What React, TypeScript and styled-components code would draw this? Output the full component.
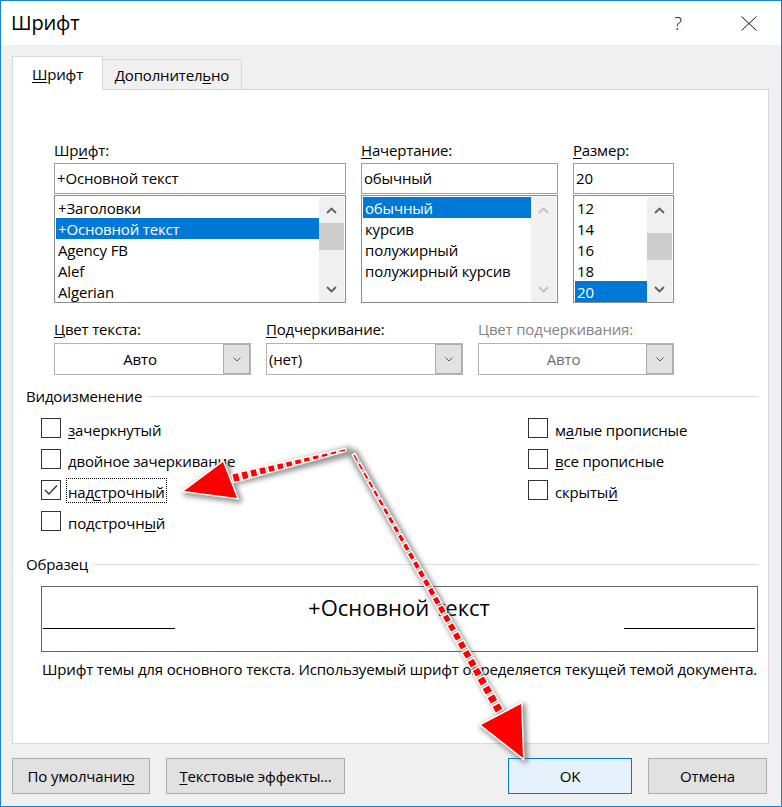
import React from "react";
import styled, { createGlobalStyle, css } from "styled-components";

const FONT = `"Open Sans", "Noto Sans", "DejaVu Sans", sans-serif`;

const GlobalStyle = createGlobalStyle`
  html, body { margin: 0; padding: 0; background: #ffffff; }
  body { font-family: ${FONT}; font-size: 15px; letter-spacing: -0.17px; color: #000; }
  * { box-sizing: border-box; }
`;

/* ---------- window frame ---------- */

const Window = styled.div`
  position: relative;
  width: 782px;
  height: 807px;
  border: 1px solid #1883d7;
  background: #f0f0f0;
  display: flex;
  flex-direction: column;
  overflow: hidden;
`;

const TitleBar = styled.div`
  height: 44px;
  flex: none;
  background: #fff;
  display: flex;
  align-items: center;
  padding: 0 9px 0 10px;
`;

const Title = styled.div`
  flex: 1;
  font-size: 20px;
  line-height: 26px;
`;

const TitleButton = styled.div`
  width: 46px;
  height: 44px;
  display: flex;
  align-items: center;
  justify-content: center;
  font-size: 19px;
  font-weight: 300;
  color: #111;
  & + & { margin-left: 25px; }
`;

const Body = styled.div`
  flex: 1;
  display: flex;
  flex-direction: column;
  padding: 11px 12px 12px 11px;
`;

/* ---------- tabs ---------- */

const TabStrip = styled.div`
  display: flex;
  align-items: flex-end;
  height: 33px;
  flex: none;
`;

const Tab = styled.div<{ $active?: boolean }>`
  display: flex;
  align-items: center;
  justify-content: center;
  border: 1px solid #d9d9d9;
  border-bottom: none;
  white-space: nowrap;
  ${(p) =>
    p.$active
      ? css`
          width: 91px;
          height: 34px;
          margin-bottom: -1px;
          background: #fff;
          position: relative;
          z-index: 1;
        `
      : css`
          width: 139px;
          height: 30px;
          border-left: none;
          background: #f0f0f0;
        `}
`;

const Panel = styled.div`
  height: 655px;
  flex: none;
  background: #fff;
  border: 1px solid #d9d9d9;
  padding: 50px 10px 0 13px;
  display: flex;
  flex-direction: column;
`;

const Key = styled.span`
  text-decoration: underline;
  text-decoration-thickness: 1px;
  text-underline-offset: 2px;
`;

/* ---------- font / style / size pickers ---------- */

const PickerRow = styled.div`
  display: grid;
  grid-template-columns: 292px 197px 101px;
  column-gap: 15px;
  margin-left: 28px;
`;

const Field = styled.div`
  display: flex;
  flex-direction: column;
`;

const FieldLabel = styled.div<{ $disabled?: boolean }>`
  height: 20px;
  line-height: 20px;
  white-space: nowrap;
  color: ${(p) => (p.$disabled ? "#838383" : "#000")};
`;

const TextBox = styled.div`
  margin-top: 3px;
  height: 31px;
  border: 1px solid #a0a0a0;
  padding-left: 2px;
  line-height: 29px;
  white-space: nowrap;
`;

const ListFrame = styled.div`
  margin-top: 1px;
  height: 108px;
  border: 1px solid #8c8c8c;
  padding: 1px 1px 0 1px;
  display: flex;
  background: #fff;
`;

const Items = styled.div`
  flex: 1;
  min-width: 0;
  display: flex;
  flex-direction: column;
  overflow: hidden;
`;

const Item = styled.div<{ $selected?: boolean }>`
  height: 21px;
  line-height: 22px;
  padding-left: 2px;
  white-space: nowrap;
  background: ${(p) => (p.$selected ? "#0078d7" : "transparent")};
  color: ${(p) => (p.$selected ? "#fff" : "#000")};
`;

const ScrollBar = styled.div`
  width: 25px;
  height: 105px;
  flex: none;
  display: flex;
  flex-direction: column;
  background: #f0f0f0;
`;

const ScrollButton = styled.div`
  height: 26px;
  flex: none;
  display: flex;
  align-items: center;
  justify-content: center;
`;

const Track = styled.div`
  flex: 1;
`;

const Thumb = styled.div<{ $offset: number }>`
  height: 27px;
  margin-top: ${(p) => p.$offset}px;
  background: #cdcdcd;
`;

const Chevron = ({ up, color }: { up?: boolean; color: string }) => (
  <svg width="11" height="7" viewBox="0 0 11 7">
    <path
      d={up ? "M1 6 L5.5 1.5 L10 6" : "M1 1 L5.5 5.5 L10 1"}
      fill="none"
      stroke={color}
      strokeWidth="1.8"
    />
  </svg>
);

type ListProps = {
  items: string[];
  selected: number;
  thumb?: number;
  disabled?: boolean;
};

const ListBox = ({ items, selected, thumb, disabled }: ListProps) => {
  const arrow = disabled ? "#c2c2c2" : "#606060";
  return (
    <ListFrame>
      <Items>
        {items.map((t, i) => (
          <Item key={t} $selected={i === selected}>
            {t}
          </Item>
        ))}
      </Items>
      <ScrollBar>
        <ScrollButton>
          <Chevron up color={arrow} />
        </ScrollButton>
        <Track>{thumb !== undefined && <Thumb $offset={thumb} />}</Track>
        <ScrollButton>
          <Chevron color={arrow} />
        </ScrollButton>
      </ScrollBar>
    </ListFrame>
  );
};

/* ---------- combo boxes ---------- */

const ComboRow = styled.div`
  display: grid;
  grid-template-columns: 197px 197px 196px;
  column-gap: 15px;
  margin-left: 28px;
  margin-top: 16px;
`;

const Combo = styled.div`
  margin-top: 4px;
  height: 32px;
  border: 1px solid #b4b4b4;
  display: flex;
  background: #fff;
`;

const ComboValue = styled.div<{ $center?: boolean; $disabled?: boolean }>`
  flex: 1;
  line-height: 30px;
  padding-left: 2px;
  text-align: ${(p) => (p.$center ? "center" : "left")};
  color: ${(p) => (p.$disabled ? "#6d6d6d" : "#000")};
`;

const ComboButton = styled.div`
  width: 27px;
  flex: none;
  background: #e1e1e1;
  border: 1px solid #adadad;
  display: flex;
  align-items: center;
  justify-content: center;
`;

const SmallChevron = () => (
  <svg width="8" height="5" viewBox="0 0 8 5">
    <path d="M0.5 0.5 L4 4 L7.5 0.5" fill="none" stroke="#5a5a5a" strokeWidth="1" />
  </svg>
);

/* ---------- group headers ---------- */

const Legend = styled.div<{ $gap: number }>`
  display: flex;
  align-items: center;
  gap: 6px;
  height: 20px;
  margin-top: ${(p) => p.$gap}px;
  white-space: nowrap;
`;

const LegendRule = styled.div`
  flex: 1;
  height: 1px;
  background: #dcdcdc;
`;

/* ---------- effects check boxes ---------- */

const Effects = styled.div`
  display: grid;
  grid-template-columns: 487px 1fr;
  margin: 12px 0 0 15px;
`;

const CheckColumn = styled.div`
  display: flex;
  flex-direction: column;
  gap: 11px;
`;

const CheckRow = styled.div`
  display: flex;
  align-items: center;
  height: 20px;
  gap: 5px;
`;

const Box = styled.div`
  width: 20px;
  height: 20px;
  flex: none;
  border: 1px solid #333;
  background: #fff;
  display: flex;
  align-items: center;
  justify-content: center;
`;

const CheckLabel = styled.div<{ $focused?: boolean }>`
  line-height: 20px;
  padding: 3px 1px 0;
  border: 1px dotted ${(p) => (p.$focused ? "#000" : "transparent")};
  white-space: nowrap;
`;

const Tick = () => (
  <svg width="14" height="12" viewBox="0 0 14 12">
    <path d="M1 6 L5 10 L13 1.5" fill="none" stroke="#333" strokeWidth="1.3" />
  </svg>
);

/* ---------- sample ---------- */

const SampleBox = styled.div`
  margin: 12px 0 0 15px;
  height: 66px;
  border: 1px solid #646464;
  display: flex;
  flex-direction: column;
  padding: 6px 2px 0 1px;
`;

const SampleText = styled.div`
  font-size: 22px;
  line-height: 29px;
  letter-spacing: 0;
  text-align: center;
`;

const Baselines = styled.div`
  display: flex;
  justify-content: space-between;
  margin-top: 6px;
`;

const Baseline = styled.div<{ $w: number }>`
  width: ${(p) => p.$w}px;
  height: 1px;
  background: #000;
`;

const Note = styled.div`
  margin: 7px 0 0 16px;
  line-height: 20px;
  white-space: nowrap;
`;

/* ---------- buttons ---------- */

const Footer = styled.div`
  display: flex;
  margin-top: 14px;
  padding-right: 2px;
  gap: 16px;
`;

const Spacer = styled.div`
  flex: 1;
`;

const Button = styled.div<{ $w: number; $primary?: boolean }>`
  width: ${(p) => p.$w}px;
  height: 36px;
  display: flex;
  align-items: center;
  justify-content: center;
  white-space: nowrap;
  border: 1px solid ${(p) => (p.$primary ? "#0078d7" : "#adadad")};
  background: ${(p) => (p.$primary ? "#e5f1fb" : "#e1e1e1")};
`;

/* ---------- red pointer arrows ---------- */

const Overlay = styled.svg`
  position: absolute;
  left: -1px;
  top: -1px;
  pointer-events: none;
`;

type Pt = [number, number];

type Dash = { a: Pt; b: Pt; w: number };

function makeDashes(from: Pt, to: Pt, count: number, w0: number, w1: number, fill: number): Dash[] {
  const dx = to[0] - from[0];
  const dy = to[1] - from[1];
  const out: Dash[] = [];
  for (let i = 0; i < count; i++) {
    const t0 = i / count;
    const t1 = (i + fill) / count;
    const w = w0 + ((w1 - w0) * i) / (count - 1);
    out.push({
      a: [from[0] + dx * t0, from[1] + dy * t0],
      b: [from[0] + dx * t1, from[1] + dy * t1],
      w,
    });
  }
  return out;
}

function extend(d: Dash, by: number): [Pt, Pt] {
  const dx = d.b[0] - d.a[0];
  const dy = d.b[1] - d.a[1];
  const len = Math.hypot(dx, dy) || 1;
  const ux = (dx / len) * by;
  const uy = (dy / len) * by;
  return [
    [d.a[0] - ux, d.a[1] - uy],
    [d.b[0] + ux, d.b[1] + uy],
  ];
}

type ArrowSpec = { from: Pt; to: Pt; count: number; head: Pt[] };

const corner: Pt = [350, 449];

const arrows: ArrowSpec[] = [
  {
    from: [345, 450],
    to: [230, 479],
    count: 13,
    head: [
      [184, 491],
      [223, 462],
      [237, 498],
    ],
  },
  {
    from: [354, 455],
    to: [501, 714],
    count: 29,
    head: [
      [523, 758],
      [481, 725],
      [521, 704],
    ],
  },
];

const Arrows = () => {
  const sets = arrows.map((ar) => makeDashes(ar.from, ar.to, ar.count, 1.5, 7.5, 0.62));
  const pts = (p: Pt[]) => p.map((q) => q.join(",")).join(" ");
  return (
    <Overlay width="782" height="807" viewBox="0 0 782 807">
      <defs>
        <filter id="glow" x="-20%" y="-20%" width="140%" height="140%">
          <feGaussianBlur stdDeviation="2.6" />
        </filter>
      </defs>
      <g filter="url(#glow)" opacity="0.6" transform="translate(2 2)">
        {arrows.map((ar, i) => (
          <g key={i}>
            <polyline
              points={pts([corner, ar.to])}
              fill="none"
              stroke="#555"
              strokeWidth="10"
              strokeLinejoin="round"
            />
            <polygon points={pts(ar.head)} fill="#555" stroke="#555" strokeWidth="6" strokeLinejoin="round" />
          </g>
        ))}
      </g>
      {sets.map((set, i) => (
        <g key={i}>
          {set.map((d, j) => {
            const [a, b] = extend(d, 1.5);
            return (
              <line
                key={j}
                x1={a[0]}
                y1={a[1]}
                x2={b[0]}
                y2={b[1]}
                stroke="#fff"
                strokeWidth={d.w + 3}
              />
            );
          })}
          <polygon points={pts(arrows[i].head)} fill="#fff" stroke="#fff" strokeWidth="3" strokeLinejoin="miter" />
          {set.map((d, j) => (
            <line key={j} x1={d.a[0]} y1={d.a[1]} x2={d.b[0]} y2={d.b[1]} stroke="#ff0000" strokeWidth={d.w} />
          ))}
          <polygon points={pts(arrows[i].head)} fill="#ff0000" />
        </g>
      ))}
    </Overlay>
  );
};

/* ---------- dialog ---------- */

const Mn = ({ text, at }: { text: string; at: number }) => (
  <>
    {text.slice(0, at)}
    <Key>{text[at]}</Key>
    {text.slice(at + 1)}
  </>
);

const checksLeft: { text: string; at: number; checked?: boolean }[] = [
  { text: "зачеркнутый", at: 0 },
  { text: "двойное зачеркивание", at: 0 },
  { text: "надстрочный", at: 3, checked: true },
  { text: "подстрочный", at: 9 },
];

const checksRight = [
  { text: "малые прописные", at: 1 },
  { text: "все прописные", at: 0 },
  { text: "скрытый", at: 6 },
];

export default function App() {
  return (
    <>
      <GlobalStyle />
      <Window>
        <TitleBar>
          <Title>Шрифт</Title>
          <TitleButton>?</TitleButton>
          <TitleButton>
            <svg width="16" height="15" viewBox="0 0 16 15">
              <path d="M0.5 0.5 L15.5 14.5 M15.5 0.5 L0.5 14.5" stroke="#111" strokeWidth="1" fill="none" />
            </svg>
          </TitleButton>
        </TitleBar>
        <Body>
          <TabStrip>
            <Tab $active>
              <Mn text="Шрифт" at={0} />
            </Tab>
            <Tab>
              <Mn text="Дополнительно" at={10} />
            </Tab>
          </TabStrip>
          <Panel>
            <PickerRow>
              <Field>
                <FieldLabel>
                  <Mn text="Шрифт:" at={2} />
                </FieldLabel>
                <TextBox>+Основной текст</TextBox>
                <ListBox
                  items={["+Заголовки", "+Основной текст", "Agency FB", "Alef", "Algerian"]}
                  selected={1}
                  thumb={0}
                />
              </Field>
              <Field>
                <FieldLabel>
                  <Mn text="Начертание:" at={0} />
                </FieldLabel>
                <TextBox>обычный</TextBox>
                <ListBox
                  items={["обычный", "курсив", "полужирный", "полужирный курсив"]}
                  selected={0}
                  disabled
                />
              </Field>
              <Field>
                <FieldLabel>
                  <Mn text="Размер:" at={0} />
                </FieldLabel>
                <TextBox>20</TextBox>
                <ListBox items={["12", "14", "16", "18", "20"]} selected={4} thumb={10} />
              </Field>
            </PickerRow>

            <ComboRow>
              <Field>
                <FieldLabel>
                  <Mn text="Цвет текста:" at={0} />
                </FieldLabel>
                <Combo>
                  <ComboValue $center>Авто</ComboValue>
                  <ComboButton>
                    <SmallChevron />
                  </ComboButton>
                </Combo>
              </Field>
              <Field>
                <FieldLabel>
                  <Mn text="Подчеркивание:" at={0} />
                </FieldLabel>
                <Combo>
                  <ComboValue>(нет)</ComboValue>
                  <ComboButton>
                    <SmallChevron />
                  </ComboButton>
                </Combo>
              </Field>
              <Field>
                <FieldLabel $disabled>Цвет подчеркивания:</FieldLabel>
                <Combo>
                  <ComboValue $center $disabled>
                    Авто
                  </ComboValue>
                  <ComboButton>
                    <SmallChevron />
                  </ComboButton>
                </Combo>
              </Field>
            </ComboRow>

            <Legend $gap={11}>
              Видоизменение
              <LegendRule />
            </Legend>

            <Effects>
              <CheckColumn>
                {checksLeft.map((c) => (
                  <CheckRow key={c.text}>
                    <Box>{c.checked && <Tick />}</Box>
                    <CheckLabel $focused={c.checked}>
                      <Mn text={c.text} at={c.at} />
                    </CheckLabel>
                  </CheckRow>
                ))}
              </CheckColumn>
              <CheckColumn>
                {checksRight.map((c) => (
                  <CheckRow key={c.text}>
                    <Box />
                    <CheckLabel>
                      <Mn text={c.text} at={c.at} />
                    </CheckLabel>
                  </CheckRow>
                ))}
              </CheckColumn>
            </Effects>

            <Legend $gap={23}>
              Образец
              <LegendRule />
            </Legend>

            <SampleBox>
              <SampleText>+Основной текст</SampleText>
              <Baselines>
                <Baseline $w={132} />
                <Baseline $w={131} />
              </Baselines>
            </SampleBox>

            <Note>
              Шрифт темы для основного текста. Используемый шрифт определяется текущей темой документа.
            </Note>
          </Panel>

          <Footer>
            <Button $w={138}>
              <Mn text="По умолчанию" at={11} />
            </Button>
            <Button $w={179}>
              <Mn text="Текстовые эффекты..." at={0} />
            </Button>
            <Spacer />
            <Button $w={124} $primary>
              OK
            </Button>
            <Button $w={119}>Отмена</Button>
          </Footer>
        </Body>
        <Arrows />
      </Window>
    </>
  );
}
